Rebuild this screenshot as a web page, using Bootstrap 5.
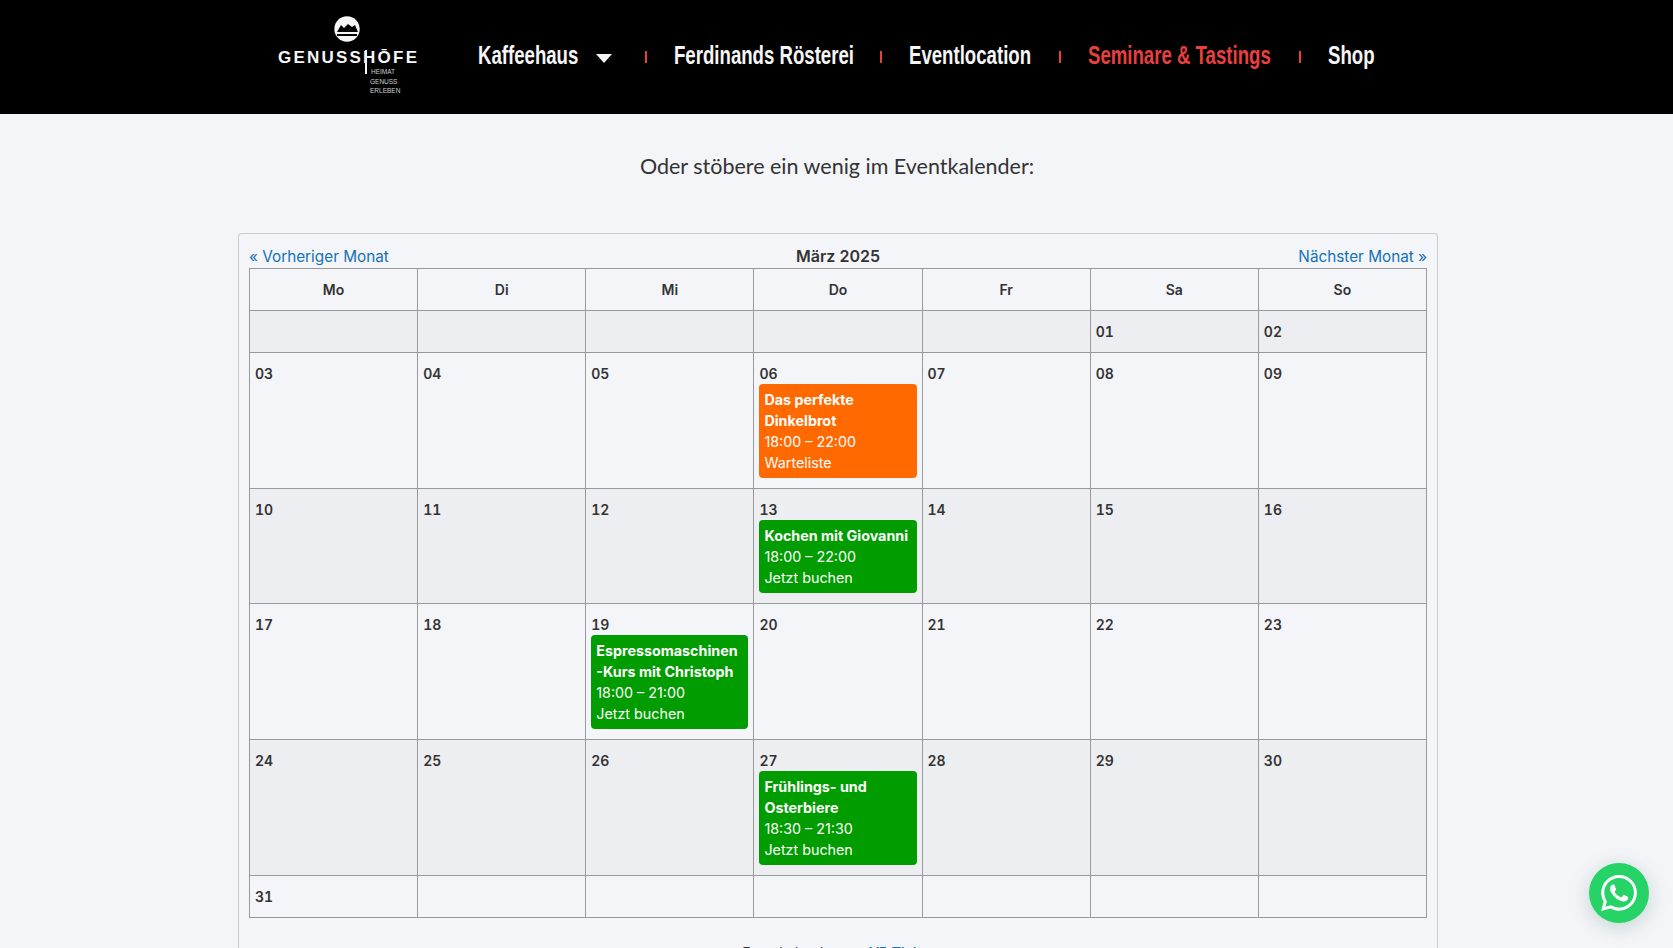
<!DOCTYPE html>
<html lang="de">
<head>
  <meta charset="UTF-8" />
  <title>Genusshöfe Eventkalender</title>
  <link href="https://cdn.jsdelivr.net/npm/bootstrap@5.3.0/dist/css/bootstrap.min.css" rel="stylesheet" />
  <style>
    body { background: #f4f5f9; color: #333; font-family: Inter, "Liberation Sans", sans-serif; }
    .page-clip { height: 100vh; overflow: hidden; }
    .top-bar { background: #000; height: 114px; padding-left: 278px; }
    .logo-svg { width: 140px; height: 96px; margin-right: 60px; }
    .menu-link { display: block; color: #f6f6f6; font-family: "Liberation Sans", sans-serif; font-weight: 700; font-size: 25.5px; line-height: 1; text-decoration: none; white-space: nowrap; margin-top: -2px; }
    .menu-link span { display: inline-block; transform: scaleX(.73); transform-origin: left center; }
    .menu-link.is-active { color: #e8403f; }
    .w-kaffee { width: 105px; }
    .w-ferdi { width: 179px; }
    .w-event { width: 123px; }
    .w-semi { width: 184px; }
    .w-shop { width: 44px; }
    .menu-sep { width: 2px; height: 12px; background: #e8403f; margin: 0 27px; }
    .menu-caret { width: 0; height: 0; border-left: 8px solid transparent; border-right: 8px solid transparent; border-top: 9px solid #f6f6f6; margin-left: 13px; margin-right: 6px; margin-top: 3px; }
    .intro-line { font-family: Lato, "Open Sans", sans-serif; font-size: 21.5px; line-height: 32px; color: #333; margin: 36px 0 51px; padding-left: 1px; text-align: center; }
    .cal-box { width: 1200px; margin-left: 238px; border: 1px solid #ccc; border-bottom: 0; border-radius: 4px 4px 0 0; padding: 9px 10px 0; }
    .cal-head { height: 25px; font-size: 15.3px; line-height: 27px; }
    .cal-head > * { flex: 1 1 0; }
    .cal-head a { color: #1271b8; text-decoration: none; }
    .cal-title { font-weight: 600; font-size: 16px; }
    .cal-table { table-layout: fixed; margin: 0; --bs-table-bg: transparent; --bs-table-color: #333; border-color: #999; font-size: 14px; line-height: 21px; font-feature-settings: "tnum"; }
    .cal-table th, .cal-table td { padding: 10px 5px; font-weight: 600; }
    .cal-table td { vertical-align: top; }
    .cal-table th { text-align: center; font-size: 14px; }
    .row-grey td { background: #edeef2; }
    .cal-event { border-radius: 4px; padding: 5px; color: #fff; font-weight: 400; font-size: 14.3px; font-feature-settings: normal; }
    .cal-event strong { display: block; font-weight: 700; }
    .ev-green { background: #009c00; }
    .ev-orange { background: #ff6900; }
    .cal-foot { text-align: center; font-size: 14px; margin-top: 24px; }
    .cal-foot a { color: #1271b8; text-decoration: none; font-weight: 600; }
    .wa-btn { position: fixed; right: 24px; bottom: 25px; width: 60px; height: 60px; border-radius: 50%; background: #25d366; box-shadow: 0 4px 20px rgba(30, 90, 60, .22); }
    .wa-btn svg { width: 36px; height: 36px; fill: #fff; }
  </style>
</head>

<body>
  <div class="page-clip">
    <nav class="top-bar d-flex align-items-center">
      <svg class="logo-svg" viewBox="0 0 140 96" role="img" aria-label="Genusshöfe">
        <circle cx="69" cy="20" r="12.7" fill="#f6f6f6" />
        <path d="M59 23 L63 16 L66 19 L70 15 L74 18 L77 16 L80 23 Z" fill="#000" />
        <path d="M59 25 H79 V27 H59 Z" fill="#000" />
        <text x="0" y="54" fill="#f6f6f6" font-family="Liberation Sans, sans-serif" font-size="17" font-weight="700" textLength="139">GENUSSHŌFE</text>
        <path d="M87 41 H89 V65 H87 Z" fill="#f6f6f6" />
        <g fill="#cfcfcf" font-family="Liberation Sans, sans-serif" font-size="6.5">
          <text x="93" y="65">HEIMAT</text>
          <text x="92" y="75">GENUSS</text>
          <text x="92" y="84">ERLEBEN</text>
        </g>
      </svg>
      <a class="menu-link w-kaffee" href="#"><span>Kaffeehaus</span></a>
      <span class="menu-caret"></span>
      <span class="menu-sep"></span>
      <a class="menu-link w-ferdi" href="#"><span>Ferdinands Rösterei</span></a>
      <span class="menu-sep"></span>
      <a class="menu-link w-event" href="#"><span>Eventlocation</span></a>
      <span class="menu-sep"></span>
      <a class="menu-link w-semi is-active" href="#"><span>Seminare &amp; Tastings</span></a>
      <span class="menu-sep"></span>
      <a class="menu-link w-shop" href="#"><span>Shop</span></a>
    </nav>

    <p class="intro-line">Oder stöbere ein wenig im Eventkalender:</p>

    <div class="cal-box">
      <div class="cal-head d-flex">
        <a href="#">« Vorheriger Monat</a>
        <span class="cal-title text-center">März 2025</span>
        <a class="text-end" href="#">Nächster Monat »</a>
      </div>
      <table class="table table-bordered cal-table">
        <thead>
          <tr><th>Mo</th><th>Di</th><th>Mi</th><th>Do</th><th>Fr</th><th>Sa</th><th>So</th></tr>
        </thead>
        <tbody>
          <tr class="row-grey"><td></td><td></td><td></td><td></td><td></td><td>01</td><td>02</td></tr>
          <tr>
            <td>03</td><td>04</td><td>05</td>
            <td>06
              <div class="cal-event ev-orange"><strong>Das perfekte Dinkelbrot</strong>18:00 – 22:00<br />Warteliste</div>
            </td>
            <td>07</td><td>08</td><td>09</td>
          </tr>
          <tr class="row-grey">
            <td>10</td><td>11</td><td>12</td>
            <td>13
              <div class="cal-event ev-green"><strong>Kochen mit Giovanni</strong>18:00 – 22:00<br />Jetzt buchen</div>
            </td>
            <td>14</td><td>15</td><td>16</td>
          </tr>
          <tr>
            <td>17</td><td>18</td>
            <td>19
              <div class="cal-event ev-green"><strong>Espressomaschinen<br />-Kurs mit Christoph</strong>18:00 – 21:00<br />Jetzt buchen</div>
            </td>
            <td>20</td><td>21</td><td>22</td><td>23</td>
          </tr>
          <tr class="row-grey">
            <td>24</td><td>25</td><td>26</td>
            <td>27
              <div class="cal-event ev-green"><strong>Frühlings- und Osterbiere</strong>18:30 – 21:30<br />Jetzt buchen</div>
            </td>
            <td>28</td><td>29</td><td>30</td>
          </tr>
          <tr><td>31</td><td></td><td></td><td></td><td></td><td></td><td></td></tr>
        </tbody>
      </table>
      <p class="cal-foot">Eventkalender von <a href="#">VR Ticket</a></p>
    </div>
  </div>

  <a class="wa-btn d-flex align-items-center justify-content-center" href="#" aria-label="WhatsApp">
    <svg viewBox="0 0 24 24"><path d="M17.472 14.382c-.297-.149-1.758-.867-2.03-.967-.273-.099-.471-.148-.67.15-.197.297-.767.966-.94 1.164-.173.199-.347.223-.644.075-.297-.15-1.255-.463-2.39-1.475-.883-.788-1.48-1.761-1.653-2.059-.173-.297-.018-.458.13-.606.134-.133.298-.347.446-.52.149-.174.198-.298.298-.497.099-.198.05-.371-.025-.52-.075-.149-.669-1.612-.916-2.207-.242-.579-.487-.5-.669-.51-.173-.008-.371-.01-.57-.01-.198 0-.52.074-.792.372-.272.297-1.04 1.016-1.04 2.479 0 1.462 1.065 2.875 1.213 3.074.149.198 2.096 3.2 5.077 4.487.709.306 1.262.489 1.694.625.712.227 1.36.195 1.871.118.571-.085 1.758-.719 2.006-1.413.248-.694.248-1.289.173-1.413-.074-.124-.272-.198-.57-.347m-5.421 7.403h-.004a9.87 9.87 0 01-5.031-1.378l-.361-.214-3.741.982.998-3.648-.235-.374a9.86 9.86 0 01-1.51-5.26c.001-5.45 4.436-9.884 9.888-9.884 2.64 0 5.122 1.03 6.988 2.898a9.825 9.825 0 012.893 6.994c-.003 5.45-4.437 9.884-9.885 9.884m8.413-18.297A11.815 11.815 0 0012.05 0C5.495 0 .16 5.335.157 11.892c0 2.096.547 4.142 1.588 5.945L.057 24l6.305-1.654a11.882 11.882 0 005.683 1.448h.005c6.554 0 11.89-5.335 11.893-11.893a11.821 11.821 0 00-3.48-8.413z" /></svg>
  </a>

  <script src="https://cdn.jsdelivr.net/npm/bootstrap@5.3.0/dist/js/bootstrap.bundle.min.js"></script>
</body>

</html>
